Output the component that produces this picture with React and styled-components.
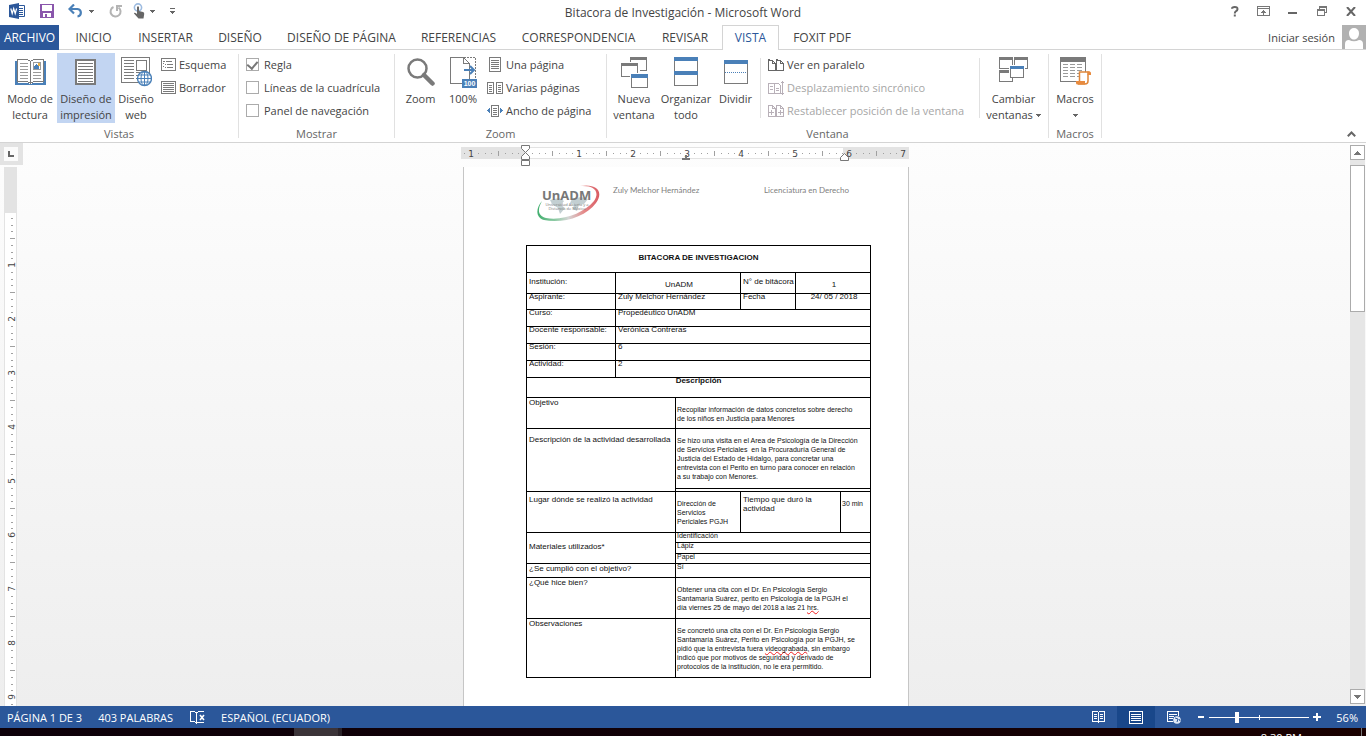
import React, { useState } from 'react';
import styled, { createGlobalStyle, css } from 'styled-components';

const blue = '#2b579a';
const steel = '#4a80b8';
const grey = '#7a7a7a';

const GlobalStyle = createGlobalStyle`
  * {
    box-sizing: border-box;
  }
  body {
    margin: 0;
    overflow: hidden;
    background: #fff;
    color: #444;
    font-family: 'Open Sans', 'Noto Sans', sans-serif;
    font-size: 11px;
  }
  button, input {
    font: inherit;
    color: inherit;
  }
  button {
    padding: 0;
    border: none;
    background: transparent;
    cursor: pointer;
  }
  svg {
    display: block;
    flex: none;
  }
`;

/* ---------- icons ---------- */

const Svg = ({ w, h, soft, children }) => (
  <svg
    width={w}
    height={h}
    viewBox={`0 0 ${w} ${h}`}
    fill="none"
    shapeRendering={soft ? 'auto' : 'crispEdges'}
    aria-hidden="true"
  >
    {children}
  </svg>
);

const Lines = ({ x, y, w, n, step = 3, color = grey }) =>
  Array.from({ length: n }, (_, i) => (
    <rect key={i} x={x} y={y + i * step} width={w} height="1" fill={color} />
  ));

const Frame = ({ x, y, w, h, color = grey, fill = '#fff' }) => (
  <rect x={x + 0.5} y={y + 0.5} width={w - 1} height={h - 1} stroke={color} fill={fill} />
);

const WordIcon = () => (
  <Svg w={17} h={16} soft>
    <path d="M8.5 2.500h7v11h-7" stroke={blue} fill="#fff" />
    <path d="M10 5.500h4M10 7.500h4M10 9.500h4M10 11.500h4" stroke={blue} />
    <path d="M0 2l10-2v16L0 14z" fill={blue} />
    <path d="M1.800 5.500l1.400 5 1.500-5 1.500 5 1.400-5" stroke="#fff" strokeWidth="1.200" />
  </Svg>
);

const SaveIcon = () => (
  <Svg w={14} h={14}>
    <path d="M0 0h14v14H0z" fill="#8a56ac" />
    <path d="M2 1h10v6H2zM3 9h8v4H3z" fill="#fff" />
    <path d="M5 10h2v3H5z" fill="#8a56ac" />
  </Svg>
);

const UndoIcon = () => (
  <Svg w={16} h={14} soft>
    <path d="M2 5h7.500a4 3.800 0 0 1 0 7.500" stroke={steel} strokeWidth="2.200" />
    <path d="M6 .5L1.500 5 6 9.500" stroke={steel} strokeWidth="2.200" />
  </Svg>
);

const RedoIcon = () => (
  <Svg w={13} h={13} soft>
    <path d="M4.500 2A5 5 0 1 0 9.500 2.500" stroke="#b4b4b4" strokeWidth="2" />
    <path d="M8 6V1h5" stroke="#b4b4b4" strokeWidth="2" />
  </Svg>
);

const TouchIcon = () => (
  <Svg w={12} h={16} soft>
    <circle cx="5" cy="4.500" r="3.600" stroke="#9dbbe0" strokeWidth="1.600" />
    <path d="M4 4q1-1.400 2 0v4l4 1q1.500.5 1.200 2l-.7 4.500H5.500L1 10.500q0-1.500 3 .5z" fill="#666" />
  </Svg>
);

const Caret = ({ color = '#666' }) => (
  <Svg w={5} h={3}>
    <path d="M0 0h5v1H4v1H3v1H2V2H1V1H0z" fill={color} />
  </Svg>
);

const CustomIcon = () => (
  <Svg w={5} h={6}>
    <path d="M0 0h5v1H0zM0 3h5v1H4v1H3v1H2V5H1V4H0z" fill="#666" />
  </Svg>
);

const HelpIcon = () => (
  <Svg w={8} h={11} soft>
    <path d="M1 2.800Q1 1 3.800 1T6.500 3.300Q6.500 4.500 4.800 5.300 3.800 5.800 3.800 7.500M3.800 8.500v2" stroke="#666" strokeWidth="2" />
  </Svg>
);

const RibbonOptionsIcon = () => (
  <Svg w={13} h={10}>
    <Frame x={0} y={0} w={13} h={10} color="#777" />
    <path d="M0 2h13v1H0zM6 4h1v5H6zM5 5h3v1H5zM4 6h5v1H4z" fill="#777" />
  </Svg>
);

const MinimizeIcon = () => (
  <Svg w={9} h={10}>
    <path d="M0 6h9v2H0z" fill="#666" />
  </Svg>
);

const RestoreIcon = () => (
  <Svg w={10} h={10}>
    <path d="M2 0h8v7H8V6h1V2H3v1H2zM0 3h8v7H0zm1 2v4h6V5z" fill="#777" fillRule="evenodd" />
  </Svg>
);

const CloseIcon = () => (
  <Svg w={10} h={9} soft>
    <path d="M1 0l8 9M9 0L1 9" stroke="#666" strokeWidth="2" />
  </Svg>
);

const AvatarIcon = () => (
  <Svg w={24} h={24} soft>
    <path d="M0 0h24v24H0z" fill="#b1b1b1" />
    <path d="M7 8a5 5 0 0 1 10 0c0 4-2 6.500-5 6.500S7 12 7 8zM3 24v-5q0-4 4-4 5 2.500 10 0 4 0 4 4v5z" fill="#fff" />
  </Svg>
);

const ReadIcon = () => (
  <Svg w={31} h={26}>
    <path d="M0 2h3v22h11v1h3v-1h11V2h3v24H0z" fill={steel} />
    <path d="M2.500.5h10l3 2 3-2h10v22h-10l-3 2-3-2h-10z" stroke={grey} fill="#fff" />
    <path d="M15 2h1v22h-1z" fill={grey} />
    <Lines x={5} y={4} w={8} n={6} color="#9a9a9a" />
    <Lines x={18} y={13} w={8} n={3} color="#9a9a9a" />
    <Frame x={18} y={3} w={8} h={8} color="#9a9a9a" />
    <path d="M19 10V7l2-2 3 3v2z" fill={steel} />
    <path d="M23 4h2v3h-2z" fill="#e8b04a" />
  </Svg>
);

const PrintIcon = () => (
  <Svg w={22} h={26}>
    <rect x="1" y="1" width="19" height="24" stroke={grey} strokeWidth="2" fill="#fff" />
    <Lines x={3} y={4} w={15} n={7} />
  </Svg>
);

const GlobeIcon = ({ x = 0, y = 0 }) => (
  <g transform={`translate(${x} ${y})`} shapeRendering="auto">
    <circle cx="7.500" cy="7.500" r="7" fill="#fff" stroke={steel} strokeWidth="1.400" />
    <path d="M.5 7.500h14M2 4h11M2 11h11M7.500.5v14" stroke={steel} />
    <ellipse cx="7.500" cy="7.500" rx="3.500" ry="7" stroke={steel} />
  </g>
);

const WebIcon = () => (
  <Svg w={31} h={30}>
    <Frame x={0} y={0} w={29} h={26} />
    <Lines x={3} y={3} w={10} n={7} />
    <Lines x={15} y={15} w={4} n={3} />
    <Frame x={15} y={3} w={11} h={11} />
    <GlobeIcon x={16} y={14} />
  </Svg>
);

const OutlineIcon = () => (
  <Svg w={15} h={13}>
    <Frame x={0} y={0} w={15} h={13} />
    <path d="M2 3h2v1H2zM5 3h6v1H5zM4 6h1v1H4zM6 6h6v1H6zM4 9h1v1H4zM6 9h6v1H6zM2 5h1v1H2zM2 8h1v1H2z" fill={grey} />
  </Svg>
);

const DraftIcon = () => (
  <Svg w={15} h={13}>
    <Frame x={0} y={0} w={15} h={13} />
    <Lines x={2} y={2} w={11} n={5} step={2} />
  </Svg>
);

const ZoomIcon = () => (
  <Svg w={28} h={28} soft>
    <circle cx="10.500" cy="10.500" r="9" stroke={grey} strokeWidth="2.500" fill="#fff" />
    <path d="M17 17l8.500 8.500" stroke={grey} strokeWidth="4.500" strokeLinecap="round" />
  </Svg>
);

const HundredLabel = styled.text`
  font: bold 7px 'Liberation Sans', Arial, sans-serif;
  fill: #fff;
  text-anchor: middle;
`;

const HundredIcon = () => (
  <Svg w={27} h={31}>
    <path d="M12 26.500H.5V.5h13l6 6v20M13.500.5v6h6" stroke={grey} />
    <path d="M14 .5h11.500V22" stroke={grey} strokeDasharray="2 1" />
    <path d="M14 13h10M20 9l4 4-4 4" stroke={steel} strokeWidth="2" shapeRendering="auto" />
    <path d="M12 22h15v9H12z" fill={steel} />
    <HundredLabel x="19.500" y="29">100</HundredLabel>
  </Svg>
);

const OnePageIcon = () => (
  <Svg w={12} h={15}>
    <Frame x={0} y={0} w={12} h={15} />
    <Lines x={2} y={3} w={8} n={5} step={2} />
  </Svg>
);

const PagesIcon = () => (
  <Svg w={16} h={12}>
    <Frame x={0} y={0} w={7} h={12} />
    <Frame x={9} y={0} w={7} h={12} />
    <Lines x={2} y={3} w={3} n={4} step={2} />
    <Lines x={11} y={3} w={3} n={4} step={2} />
  </Svg>
);

const WidthIcon = () => (
  <Svg w={16} h={12}>
    <Frame x={4} y={0} w={8} h={12} />
    <Lines x={6} y={3} w={4} n={4} step={2} />
    <path d="M0 5h1V4h1V3h1v5H2V7H1V6H0zM16 5h-1V4h-1V3h-1v5h1V7h1V6h1z" fill={steel} />
  </Svg>
);

const Win = ({ x, y, w, h, color = grey, bar = 3 }) => (
  <g>
    <Frame x={x} y={y} w={w} h={h} />
    <rect x={x} y={y} width={w} height={bar} fill={color} />
  </g>
);

const NewWindowIcon = () => (
  <Svg w={27} h={31}>
    <Win x={9} y={0} w={17} h={14} />
    <path d="M0 5h19v16H0z" fill="#fff" />
    <Win x={0} y={6} w={17} h={14} />
    <path d="M9 16h18v15H9z" fill="#fff" />
    <Win x={10} y={17} w={17} h={14} color={steel} bar={4} />
  </Svg>
);

const ArrangeIcon = () => (
  <Svg w={24} h={29}>
    <Win x={0} y={0} w={24} h={15} color={steel} bar={4} />
    <Win x={0} y={14} w={24} h={15} color={steel} bar={4} />
  </Svg>
);

const SplitIcon = () => (
  <Svg w={24} h={24}>
    <Win x={0} y={0} w={24} h={24} color={steel} bar={4} />
    <path d="M1 12.500h22" stroke={steel} strokeDasharray="1 1" />
  </Svg>
);

const SideIcon = () => (
  <Svg w={16} h={12}>
    <path d="M.5 1.500h4l3 3v7h-7zM8.500 1.500h4l3 3v7h-7zM4.500 1.500v3h3M12.500 1.500v3h3" stroke="#666" />
    <path d="M0 0h2v2H0zM8 0h2v2H8z" fill="#666" />
  </Svg>
);

const SyncIcon = () => (
  <Svg w={16} h={14}>
    <path d="M.5 2.500h6v10h-6zM6.500 2.500h4l2 2v8h-6zM14.500 0v14M13 1.500h3M13 12.500h3" stroke="#b8b0b8" />
    <path d="M2 5h3M2 8h3M8 7h3M8 9h3" stroke="#b8b0b8" />
  </Svg>
);

const ResetIcon = () => (
  <Svg w={16} h={12}>
    <path d="M.5.5h4l3 3v8h-7zM8.500.5h4l3 3v8h-7zM4.500.5v3h3M12.500.5v3h3M1 7.500h5M3.500 5v5M10 7.500h5M12.500 5v5" stroke="#b8b0b8" />
  </Svg>
);

const SwitchIcon = () => (
  <Svg w={29} h={26}>
    <Win x={0} y={0} w={14} h={12} />
    <Win x={15} y={0} w={14} h={12} />
    <Win x={0} y={13} w={14} h={12} />
    <path d="M10 8h16v13H10z" fill="#fff" />
    <Win x={11} y={9} w={14} h={12} color={steel} />
  </Svg>
);

const MacrosIcon = () => (
  <Svg w={31} h={28}>
    <Win x={0} y={0} w={26} h={25} bar={5} />
    {[3, 10, 17].map((x) => (
      <Lines key={x} x={x} y={7} w={5} n={5} color="#9a9a9a" />
    ))}
    <g shapeRendering="auto">
      <path d="M19.500 15h10q-2 1-1.500 4v5q0 3-3 3h-7q2-1 1.500-4z" fill="#fff" stroke="#e0873a" strokeWidth="1.500" />
      <path d="M16 24h9v3.500h-7.500q-1.500 0-1.500-1.500zM27 14.500h2.500q1.500 0 1.500 1.500v2h-3z" fill="#e88b3f" />
    </g>
  </Svg>
);

const CollapseIcon = () => (
  <Svg w={9} h={6} soft>
    <path d="M.8 5.200L4.500 1.500l3.700 3.700" stroke="#666" strokeWidth="2" />
  </Svg>
);

const ArrowIcon = ({ down }) => (
  <Svg w={7} h={4}>
    <path d={down ? 'M0 0h7v1H6v1H5v1H4v1H3V3H2V2H1V1H0z' : 'M3 0h1v1h1v1h1v1h1v1H0V3h1V2h1V1h1z'} fill="#777" />
  </Svg>
);

const ProofIcon = () => (
  <Svg w={15} h={13}>
    <path d="M6.500 2L4.500.5h-4v10h4l2 2 2-1.500h5M6.500 2v10M6.500 2l2-1.500h5" stroke="#fff" />
    <path d="M10 4l4 5M14 4l-4 5" stroke="#fff" strokeWidth="1.600" shapeRendering="auto" />
  </Svg>
);

const StatusReadIcon = () => (
  <Svg w={13} h={12}>
    <path d="M.5.5h5l1 1 1-1h5v10h-5l-1 1-1-1h-5zM6.500 1v11M2 3.500h3M2 5.500h3M2 7.500h3M8 3.500h3M8 5.500h3M8 7.500h3" stroke="#fff" />
  </Svg>
);

const StatusPrintIcon = () => (
  <Svg w={14} h={13}>
    <path d="M.5.5h13v12H.5zM2 3.500h10M2 5.500h10M2 7.500h10M2 9.500h10" stroke="#fff" />
  </Svg>
);

const StatusWebIcon = () => (
  <Svg w={14} h={13}>
    <path d="M6 10.500H.5V.5h11V5M2 3.500h8M2 5.500h5M2 7.500h4" stroke="#fff" />
    <circle cx="10" cy="9" r="3.800" fill="#dfe8f5" shapeRendering="auto" />
    <path d="M8 7l3 1-1 3M12 8l1 2" stroke={blue} shapeRendering="auto" />
  </Svg>
);

/* ---------- title bar and tabs ---------- */

const Window = styled.div`
  display: flex;
  flex-direction: column;
  height: 100vh;
`;

const TitleBar = styled.header`
  display: grid;
  grid-template-columns: 1fr auto 1fr;
  align-items: center;
  flex: none;
  height: 25px;
  h1 {
    margin: 0;
    font-size: 12px;
    font-weight: 400;
    line-height: 16px;
  }
`;

const QuickAccess = styled.div`
  display: flex;
  align-items: center;
  padding: 0 0 3px 9px;
`;

const QuickButton = styled.button`
  display: flex;
  align-items: center;
  margin-right: ${({ $after }) => $after}px;
`;

const WindowButtons = styled.div`
  display: flex;
  justify-content: flex-end;
  padding: 0 1px 3px 0;
`;

const WindowButton = styled.button`
  display: flex;
  align-items: center;
  justify-content: center;
  width: 29px;
  height: 20px;
`;

const TabBar = styled.nav`
  display: flex;
  flex: none;
  height: 25px;
  border-bottom: 1px solid #d4d4d4;
`;

const Tab = styled.button`
  flex: 0 0 ${({ $width }) => $width}px;
  height: 25px;
  padding-bottom: 1px;
  font-size: 12px;
  white-space: nowrap;
  ${({ $file }) =>
    $file &&
    css`
      margin-right: 2px;
      background: ${blue};
      color: #fff;
    `}
  ${({ $active }) =>
    $active &&
    css`
      border: 1px solid #d4d4d4;
      border-bottom: none;
      background: #fff;
      color: ${blue};
    `}
`;

const Account = styled.a`
  display: flex;
  align-items: center;
  gap: 7px;
  margin-left: auto;
  color: #444;
  font-size: 11px;
  text-decoration: none;
`;

/* ---------- ribbon ---------- */

const Ribbon = styled.section`
  display: flex;
  flex: none;
  height: 93px;
  border-bottom: 1px solid #d4d4d4;
`;

const GroupBox = styled.div`
  display: flex;
  flex: none;
  flex-direction: column;
  min-width: ${({ $width }) => $width}px;
  padding-top: 3px;
`;

const GroupBody = styled.div`
  display: flex;
  height: 73px;
  padding-left: ${({ $left }) => $left}px;
`;

const GroupLabel = styled.div`
  color: #666;
  line-height: 16px;
  text-align: center;
`;

const Divider = styled.span`
  flex: none;
  align-self: ${({ $inner }) => ($inner ? 'flex-start' : 'center')};
  width: 1px;
  height: ${({ $inner }) => ($inner ? 60 : 84)}px;
  margin: ${({ $inner }) => ($inner ? '5px 3px' : '0')};
  background: #e1e1e1;
`;

const BigButton = styled.button`
  display: flex;
  flex: none;
  flex-direction: column;
  align-items: center;
  width: ${({ $width }) => $width}px;
  height: 70px;
  line-height: 16px;
  white-space: nowrap;
  background: ${({ $active }) => ($active ? '#c2d5f2' : 'transparent')};
`;

const BigIcon = styled.span`
  display: flex;
  align-items: ${({ $top }) => ($top ? 'flex-start' : 'center')};
  height: 38px;
  padding-top: ${({ $top }) => ($top ? 4 : 0)}px;
`;

const WithCaret = styled.span`
  display: flex;
  align-items: center;
  justify-content: center;
  gap: 3px;
  min-height: 16px;
`;

const SmallList = styled.div`
  display: flex;
  flex-direction: column;
  min-width: ${({ $width }) => $width || 0}px;
  padding-left: ${({ $left }) => $left || 0}px;
`;

const SmallButton = styled.button`
  display: flex;
  align-items: center;
  gap: 3px;
  height: 23px;
  white-space: nowrap;
  &:disabled {
    color: #a6a6a6;
  }
`;

const SmallIcon = styled.span`
  display: flex;
  justify-content: center;
  width: 16px;
`;

const CheckRow = styled.label`
  display: flex;
  align-items: center;
  gap: 5px;
  height: 23px;
  white-space: nowrap;
`;

const CheckBox = styled.input`
  appearance: none;
  width: 13px;
  height: 13px;
  margin: 0;
  border: 1px solid #ababab;
  background: #fff;
  &:checked::after {
    content: '';
    display: block;
    width: 5px;
    height: 8px;
    margin: 0 auto;
    border: solid #777;
    border-width: 0 2px 2px 0;
    transform: rotate(40deg);
  }
`;

const CollapseButton = styled.button`
  align-self: flex-end;
  margin: 0 10px 5px auto;
`;

/* ---------- work area ---------- */

const WorkArea = styled.main`
  display: grid;
  grid-template-columns: 23px 1fr 17px;
  grid-template-rows: 24px minmax(0, 1fr);
  flex: 1;
  min-height: 0;
  background: linear-gradient(#fdfdfd, #eeeeee);
`;

const TabStop = styled.button`
  display: flex;
  align-items: center;
  justify-content: center;
  width: 23px;
  height: 22px;
  border: solid #e3e3e3;
  border-width: 4px 5px 4px 4px;
  background: #fbfbfb;
`;

const RulerSlot = styled.div`
  display: flex;
  justify-content: center;
`;

const SideRuler = styled.div`
  grid-row: 2;
  overflow: hidden;
  padding-left: 4px;
`;

const RulerText = styled.text`
  font: 9px 'DejaVu Sans', sans-serif;
  fill: #444;
  text-anchor: middle;
`;

const PageSlot = styled.div`
  display: flex;
  justify-content: center;
  overflow: hidden;
`;

const Page = styled.article`
  width: 446px;
  padding: 17px 37px 0 62px;
  border: solid #c6c6c6;
  border-width: 0 1px;
  background: #fff;
  color: #111;
`;

const PageHeader = styled.header`
  display: grid;
  grid-template-columns: 77px 151px 1fr;
  height: 61px;
  padding-left: 10px;
  color: #808080;
  font-family: Lato, sans-serif;
  font-size: 8px;
  line-height: 12px;
`;

const ScrollBar = styled.div`
  grid-column: 3;
  grid-row: 1 / 3;
  display: flex;
  flex-direction: column;
  align-items: center;
  padding: 2px 0;
`;

const ScrollButton = styled.button`
  display: flex;
  align-items: center;
  justify-content: center;
  flex: none;
  width: 15px;
  height: 15px;
  border: 1px solid #ababab;
  background: #fff;
`;

const ScrollTrack = styled.div`
  flex: 1;
  width: 15px;
  padding-top: 5px;
  background: #e6e6e6;
`;

const ScrollThumb = styled.div`
  height: 28%;
  border: 1px solid #ababab;
  background: #fff;
`;

/* ---------- document table ---------- */

const LogTable = styled.table`
  width: 344px;
  border-collapse: collapse;
  table-layout: fixed;
  font-family: 'Liberation Sans', Arial, sans-serif;
  font-size: 8px;
  line-height: 9px;
`;

const Row = styled.tr`
  height: ${({ $height }) => $height}px;
`;

const Cell = styled.td`
  padding: ${({ $top }) => $top || 0}px 0 0 ${({ $small }) => ($small ? 1 : 2)}px;
  border: 1px solid #000;
  font-size: ${({ $small }) => ($small ? 7 : 8)}px;
  text-align: ${({ $center }) => ($center ? 'center' : 'left')};
  vertical-align: top;
  white-space: nowrap;
`;

const Title = styled(Cell).attrs({ as: 'th' })`
  padding-left: 0;
  text-align: center;
`;

// rows are shorter than their text, so the tops of the letters are cut
const Cut = styled.div`
  height: 9px;
  overflow: hidden;
  line-height: 5px;
`;

const Typo = styled.span`
  text-decoration: underline wavy #f02020 1px;
  text-underline-offset: 0;
  text-decoration-skip-ink: none;
`;

/* ---------- status bar and task bar ---------- */

const StatusBar = styled.footer`
  display: flex;
  align-items: center;
  flex: none;
  height: 22px;
  padding: 0 8px 0 7px;
  background: ${blue};
  color: #fff;
`;

const StatusItem = styled.button`
  margin-right: ${({ $after }) => $after}px;
  white-space: nowrap;
`;

const ViewButton = styled.button`
  display: flex;
  align-items: center;
  justify-content: center;
  width: 38px;
  height: 22px;
  background: ${({ $active }) => ($active ? '#19478a' : 'transparent')};
`;

const Views = styled.div`
  display: flex;
  margin-left: auto;
`;

const ZoomStep = styled.button`
  display: flex;
  align-items: center;
  justify-content: center;
  width: 16px;
  height: 16px;
`;

const ZoomSlider = styled.input`
  appearance: none;
  width: 100px;
  height: 12px;
  margin: 0;
  background:
    linear-gradient(#fff, #fff) center / 100% 1px no-repeat,
    linear-gradient(#fff, #fff) center / 1px 5px no-repeat;
  &::-webkit-slider-thumb {
    appearance: none;
    width: 4px;
    height: 11px;
    background: #fff;
  }
`;

const ZoomValue = styled.button`
  width: 33px;
  text-align: right;
`;

const TaskBar = styled.div`
  display: flex;
  flex: none;
  height: 8px;
  overflow: hidden;
  background: linear-gradient(90deg, #0d0009, #120006 60%, #1a0000);
`;

const TaskItem = styled.div`
  width: 48px;
  margin-left: 294px;
  border-right: 4px solid #2a2228;
  background: #3b3338;
`;

const Clock = styled.time`
  margin: 3px 59px 0 auto;
  color: #fff;
  font-size: 11px;
  line-height: 14px;
`;

const ShowDesktop = styled.div`
  width: 5px;
  border-left: 1px solid #777;
`;

/* ---------- parts ---------- */

const INCH = 54;

const HorizontalRuler = () => {
  const zero = 64;
  const ticks = [];
  for (let i = -9; i <= 56; i++) {
    if (i % 8 !== 0) ticks.push(i);
  }
  return (
    <Svg w={450} h={24} soft>
      <path d="M0 4h448v12H0z" fill="#e3e3e3" />
      <path d="M64 5h318v10H64z" fill="#fff" />
      {ticks.map((i) => {
        const x = Math.round(zero + (i * INCH) / 8);
        const half = i % 4 === 0;
        return <rect key={i} x={x} y={half ? 8 : 10} width="1" height={half ? 5 : 1} fill="#a0a0a0" />;
      })}
      {[-1, 1, 2, 3, 4, 5, 6, 7].map((n) => (
        <RulerText key={n} x={zero + n * INCH} y="14">
          {Math.abs(n)}
        </RulerText>
      ))}
      <path d="M60.500 2.500h8v3l-4 4 4 4v3h-8v-3l4-4-4-4zM60.500 17.500h8v5h-8z" stroke="#777" fill="#fff" />
      <path d="M379.500 17.500v-3l4-4 4 4v3z" stroke="#777" fill="#fff" />
      <path d="M221 15h8v2h-8zM224 12h2v4h-2z" fill="#777" />
    </Svg>
  );
};

const VerticalRuler = () => {
  const zero = 44;
  const ticks = [];
  for (let i = 1; i < 120; i++) {
    if (i % 8 !== 0) ticks.push(i);
  }
  return (
    <Svg w={13} h={854} soft>
      <path d="M0 0h13v854H0z" fill="#e3e3e3" />
      <path d="M1 46h11v808H1z" fill="#fff" />
      {ticks.map((i) => {
        const y = Math.round(zero + (i * INCH) / 8);
        const half = i % 4 === 0;
        return <rect key={i} x={half ? 6 : 7} y={y} width={half ? 5 : 2} height="1" fill="#a0a0a0" />;
      })}
      {Array.from({ length: 14 }, (_, i) => (
        <RulerText key={i} transform={`translate(11 ${zero + (i + 1) * INCH}) rotate(-90)`}>
          {i + 1}
        </RulerText>
      ))}
    </Svg>
  );
};

const LogoName = styled.text`
  font: bold 13px 'Open Sans', sans-serif;
  fill: #777;
`;

const LogoLine = styled.text`
  font: 4px 'Open Sans', sans-serif;
  fill: #777;
  text-anchor: middle;
`;

const UnadmLogo = () => (
  <svg width="66" height="39" viewBox="0 0 66 39" fill="none" role="img" aria-label="UnADM">
    <defs>
      <linearGradient id="swoosh" x1="0" y1="0" x2="1" y2="0">
        <stop offset="0" stopColor="#3fae6d" />
        <stop offset=".3" stopColor="#8fcaa5" />
        <stop offset=".5" stopColor="#d5d5d5" />
        <stop offset=".75" stopColor="#e58a8a" />
        <stop offset="1" stopColor="#d95b63" />
      </linearGradient>
    </defs>
    <path d="M14 16l9-2 5 3-3 4 4 3-5 6-2-6-6-4zM36 15l9-2 7 2-4 5-5 1-2 6-4-2 1-5-4-1z" fill="#c3cfd2" />
    <path
      d="M44 2C61-1 68 8 60 19 50 33 26 40 8 36-1 33 0 24 6 17 1 26 2 32 10 34c17 3 38-5 48-17C64 8 59 1 44 2z"
      fill="url(#swoosh)"
    />
    <LogoName x="6" y="16">UnADM</LogoName>
    <LogoLine x="31" y="22">Universidad Abierta y a</LogoLine>
    <LogoLine x="31" y="26">Distancia de México</LogoLine>
  </svg>
);

const Group = ({ label, width, left, children }) => (
  <>
    <GroupBox role="group" aria-label={label} $width={width}>
      <GroupBody $left={left}>{children}</GroupBody>
      <GroupLabel>{label}</GroupLabel>
    </GroupBox>
    <Divider />
  </>
);

const Big = ({ icon, width, lines, active, top }) => (
  <BigButton type="button" $width={width} $active={active}>
    <BigIcon $top={top}>{icon}</BigIcon>
    {lines.map((line, i) => (
      <span key={i}>{line}</span>
    ))}
  </BigButton>
);

const Small = ({ icon, label, disabled }) => (
  <SmallButton type="button" disabled={disabled}>
    <SmallIcon>{icon}</SmallIcon>
    {label}
  </SmallButton>
);

const tabs = [
  ['INICIO', 65],
  ['INSERTAR', 79],
  ['DISEÑO', 70],
  ['DISEÑO DE PÁGINA', 133],
  ['REFERENCIAS', 101],
  ['CORRESPONDENCIA', 139],
  ['REVISAR', 74],
  ['VISTA', 57],
  ['FOXIT PDF', 86],
];

const simpleRows = [
  ['Curso:', 'Propedéutico UnADM'],
  ['Docente responsable:', 'Verónica Contreras'],
  ['Sesión:', '6'],
  ['Actividad:', '2'],
];

const Multi = ({ lines }) => lines.map((line, i) => <div key={i}>{line}</div>);

const ActivityLog = () => (
  <LogTable>
    <colgroup>
      {[89, 60, 65, 55, 45, 30].map((w) => (
        <col key={w} width={w} />
      ))}
    </colgroup>
    <tbody>
      <Row $height={27}>
        <Title colSpan={6} $top={7}>BITACORA DE INVESTIGACION</Title>
      </Row>
      <Row $height={21}>
        <Cell $top={4}>Institución:</Cell>
        <Cell colSpan={2} $top={7} $center>UnADM</Cell>
        <Cell $top={4}>N° de bitácora</Cell>
        <Cell colSpan={2} $top={7} $center>1</Cell>
      </Row>
      <Row $height={16}>
        <Cell><Cut>Aspirante:</Cut></Cell>
        <Cell colSpan={2}><Cut>Zuly Melchor Hernández</Cut></Cell>
        <Cell><Cut>Fecha</Cut></Cell>
        <Cell colSpan={2} $center><Cut>24/ 05 / 2018</Cut></Cell>
      </Row>
      {simpleRows.map(([name, value]) => (
        <Row key={name} $height={17}>
          <Cell><Cut>{name}</Cut></Cell>
          <Cell colSpan={5}><Cut>{value}</Cut></Cell>
        </Row>
      ))}
      <Row $height={20}>
        <Title colSpan={6}><Cut>Descripción</Cut></Title>
      </Row>
      <Row $height={31}>
        <Cell colSpan={2}>Objetivo</Cell>
        <Cell colSpan={4} $top={7} $small>
          <Multi
            lines={[
              'Recopilar información de datos concretos sobre derecho',
              'de los niños en Justicia para Menores',
            ]}
          />
        </Cell>
      </Row>
      <Row $height={60}>
        <Cell colSpan={2} rowSpan={2} $top={6}>Descripción de la actividad desarrollada</Cell>
        <Cell colSpan={4} $top={7} $small>
          <Multi
            lines={[
              'Se hizo una visita en el Area de Psicología de la Dirección',
              'de Servicios Periciales\u00a0 en la Procuraduría General de',
              'Justicia del Estado de Hidalgo, para concretar una',
              'entrevista con el Perito en turno para conocer en relación',
              'a su trabajo con Menores.',
            ]}
          />
        </Cell>
      </Row>
      <Row $height={3}>
        <Cell colSpan={4} />
      </Row>
      <Row $height={41}>
        <Cell colSpan={2} $top={3}>Lugar dónde se realizó la actividad</Cell>
        <Cell $top={7} $small>
          <Multi lines={['Dirección de', 'Servicios', 'Periciales PGJH']} />
        </Cell>
        <Cell colSpan={2} $top={3}>
          <Multi lines={['Tiempo que duró la', 'actividad']} />
        </Cell>
        <Cell $top={7} $small>30 min</Cell>
      </Row>
      <Row $height={10}>
        <Cell colSpan={2} rowSpan={3} $top={9}>Materiales utilizados*</Cell>
        <Cell colSpan={4} $small><Cut>Identificación</Cut></Cell>
      </Row>
      <Row $height={11}>
        <Cell colSpan={4} $small><Cut>Lápiz</Cut></Cell>
      </Row>
      <Row $height={10}>
        <Cell colSpan={4} $small><Cut>Papel</Cut></Cell>
      </Row>
      <Row $height={14}>
        <Cell colSpan={2}>¿Se cumplió con el objetivo?</Cell>
        <Cell colSpan={4} $small><Cut>Sí</Cut></Cell>
      </Row>
      <Row $height={41}>
        <Cell colSpan={2}>¿Qué hice bien?</Cell>
        <Cell colSpan={4} $top={7} $small>
          <Multi
            lines={[
              'Obtener una cita con el Dr. En Psicología Sergio',
              'Santamaría Suárez, perito en Psicología de la PGJH el',
              <>día viernes 25 de mayo del 2018 a las 21 <Typo>hrs.</Typo></>,
            ]}
          />
        </Cell>
      </Row>
      <Row $height={59}>
        <Cell colSpan={2}>Observaciones</Cell>
        <Cell colSpan={4} $top={7} $small>
          <Multi
            lines={[
              'Se concretó una cita con el Dr. En Psicología Sergio',
              'Santamaría Suárez, Perito en Psicología por la PGJH, se',
              <>pidió que la entrevista fuera <Typo>videograbada</Typo>, sin embargo</>,
              'indicó que por motivos de seguridad y derivado de',
              'protocolos de la institución, no le era permitido.',
            ]}
          />
        </Cell>
      </Row>
    </tbody>
  </LogTable>
);

function App() {
  const [tab, setTab] = useState('VISTA');
  const [zoom, setZoom] = useState(27);

  return (
    <Window>
      <GlobalStyle />
      <TitleBar>
        <QuickAccess>
          <QuickButton type="button" $after={14} aria-label="Word"><WordIcon /></QuickButton>
          <QuickButton type="button" $after={14} aria-label="Guardar"><SaveIcon /></QuickButton>
          <QuickButton type="button" $after={5} aria-label="Deshacer"><UndoIcon /></QuickButton>
          <QuickButton type="button" $after={15} aria-label="Más acciones"><Caret /></QuickButton>
          <QuickButton type="button" $after={11} aria-label="Repetir"><RedoIcon /></QuickButton>
          <QuickButton type="button" $after={5} aria-label="Modo táctil"><TouchIcon /></QuickButton>
          <QuickButton type="button" $after={15} aria-label="Opciones táctiles"><Caret /></QuickButton>
          <QuickButton type="button" aria-label="Personalizar"><CustomIcon /></QuickButton>
        </QuickAccess>
        <h1>Bitacora de Investigación - Microsoft Word</h1>
        <WindowButtons>
          <WindowButton type="button" aria-label="Ayuda"><HelpIcon /></WindowButton>
          <WindowButton type="button" aria-label="Opciones de la cinta"><RibbonOptionsIcon /></WindowButton>
          <WindowButton type="button" aria-label="Minimizar"><MinimizeIcon /></WindowButton>
          <WindowButton type="button" aria-label="Restaurar"><RestoreIcon /></WindowButton>
          <WindowButton type="button" aria-label="Cerrar"><CloseIcon /></WindowButton>
        </WindowButtons>
      </TitleBar>
      <TabBar>
        <Tab type="button" $width={59} $file>ARCHIVO</Tab>
        {tabs.map(([name, width]) => (
          <Tab key={name} type="button" $width={width} $active={tab === name} onClick={() => setTab(name)}>
            {name}
          </Tab>
        ))}
        <Account href="#cuenta">
          Iniciar sesión
          <AvatarIcon />
        </Account>
      </TabBar>
      <Ribbon>
        <Group label="Vistas" width={238} left={3}>
          <Big icon={<ReadIcon />} width={54} lines={['Modo de', 'lectura']} />
          <Big icon={<PrintIcon />} width={58} lines={['Diseño de', 'impresión']} active />
          <Big icon={<WebIcon />} width={42} lines={['Diseño', 'web']} />
          <SmallList $left={3}>
            <Small icon={<OutlineIcon />} label="Esquema" />
            <Small icon={<DraftIcon />} label="Borrador" />
          </SmallList>
        </Group>
        <Group label="Mostrar" width={155} left={7}>
          <SmallList>
            <CheckRow><CheckBox type="checkbox" defaultChecked />Regla</CheckRow>
            <CheckRow><CheckBox type="checkbox" />Líneas de la cuadrícula</CheckRow>
            <CheckRow><CheckBox type="checkbox" />Panel de navegación</CheckRow>
          </SmallList>
        </Group>
        <Group label="Zoom" width={211} left={4}>
          <Big icon={<ZoomIcon />} width={43} lines={['Zoom']} />
          <Big icon={<HundredIcon />} width={42} lines={['100%']} />
          <SmallList $left={3}>
            <Small icon={<OnePageIcon />} label="Una página" />
            <Small icon={<PagesIcon />} label="Varias páginas" />
            <Small icon={<WidthIcon />} label="Ancho de página" />
          </SmallList>
        </Group>
        <Group label="Ventana" width={441} left={3}>
          <Big icon={<NewWindowIcon />} width={48} lines={['Nueva', 'ventana']} />
          <Big icon={<ArrangeIcon />} width={56} lines={['Organizar', 'todo']} top />
          <Big icon={<SplitIcon />} width={43} lines={['Dividir']} />
          <Divider $inner />
          <SmallList $left={4} $width={212}>
            <Small icon={<SideIcon />} label="Ver en paralelo" />
            <Small icon={<SyncIcon />} label="Desplazamiento sincrónico" disabled />
            <Small icon={<ResetIcon />} label="Restablecer posición de la ventana" disabled />
          </SmallList>
          <Divider $inner />
          <Big
            icon={<SwitchIcon />}
            width={61}
            lines={['Cambiar', <WithCaret key="v">ventanas <Caret /></WithCaret>]}
            top
          />
        </Group>
        <Group label="Macros" width={52} left={3}>
          <Big
            icon={<MacrosIcon />}
            width={46}
            lines={['Macros', <WithCaret key="m"><Caret /></WithCaret>]}
            top
          />
        </Group>
        <CollapseButton type="button" aria-label="Contraer la cinta"><CollapseIcon /></CollapseButton>
      </Ribbon>
      <WorkArea>
        <TabStop type="button" aria-label="Tabulación izquierda">
          <Svg w={6} h={6}>
            <path d="M0 0h2v4h4v2H0z" fill="#666" />
          </Svg>
        </TabStop>
        <RulerSlot><HorizontalRuler /></RulerSlot>
        <SideRuler><VerticalRuler /></SideRuler>
        <PageSlot>
          <Page>
            <PageHeader>
              <UnadmLogo />
              <span>Zuly Melchor Hernández</span>
              <span>Licenciatura en Derecho</span>
            </PageHeader>
            <ActivityLog />
          </Page>
        </PageSlot>
        <ScrollBar>
          <ScrollButton type="button" aria-label="Subir"><ArrowIcon /></ScrollButton>
          <ScrollTrack><ScrollThumb /></ScrollTrack>
          <ScrollButton type="button" aria-label="Bajar"><ArrowIcon down /></ScrollButton>
        </ScrollBar>
      </WorkArea>
      <StatusBar>
        <StatusItem type="button" $after={16}>PÁGINA 1 DE 3</StatusItem>
        <StatusItem type="button" $after={17}>403 PALABRAS</StatusItem>
        <StatusItem type="button" $after={16} aria-label="Revisión"><ProofIcon /></StatusItem>
        <StatusItem type="button">ESPAÑOL (ECUADOR)</StatusItem>
        <Views>
          <ViewButton type="button" aria-label="Modo de lectura"><StatusReadIcon /></ViewButton>
          <ViewButton type="button" aria-label="Diseño de impresión" $active><StatusPrintIcon /></ViewButton>
          <ViewButton type="button" aria-label="Diseño web"><StatusWebIcon /></ViewButton>
        </Views>
        <ZoomStep type="button" aria-label="Alejar">
          <Svg w={6} h={2}><path d="M0 0h6v2H0z" fill="#fff" /></Svg>
        </ZoomStep>
        <ZoomSlider
          type="range"
          aria-label="Zoom"
          value={zoom}
          onChange={(e) => setZoom(Number(e.target.value))}
        />
        <ZoomStep type="button" aria-label="Acercar">
          <Svg w={8} h={8}><path d="M3 0h2v3h3v2H5v3H3V5H0V3h3z" fill="#fff" /></Svg>
        </ZoomStep>
        <ZoomValue type="button">56%</ZoomValue>
      </StatusBar>
      <TaskBar>
        <TaskItem />
        <Clock>8:30 PM</Clock>
        <ShowDesktop />
      </TaskBar>
    </Window>
  );
}

export default App;
